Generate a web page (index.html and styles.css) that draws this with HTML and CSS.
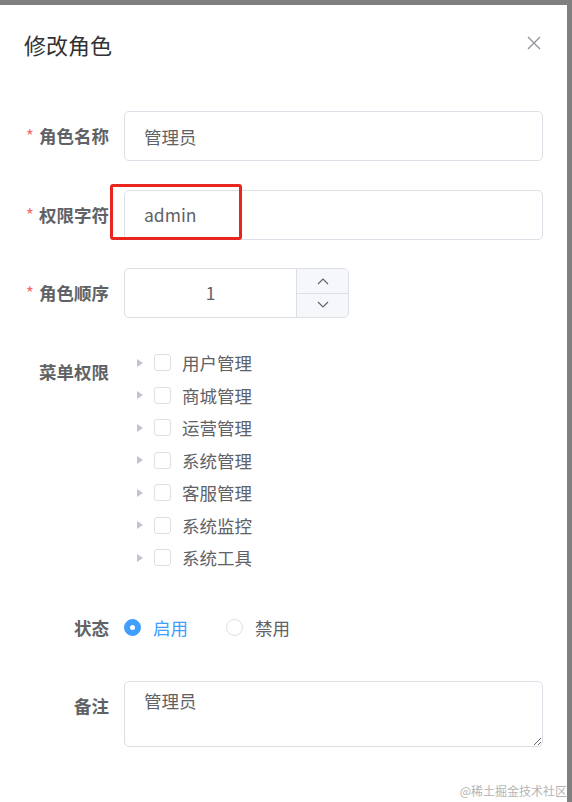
FILE: index.html
```html
<!DOCTYPE html>
<html lang="zh-CN">
<head>
<meta charset="utf-8">
<title>修改角色</title>
<link rel="stylesheet" href="styles.css">
</head>
<body>
<div class="dialog">
  <div class="dialog-header">
    <span class="dialog-title">修改角色</span>
    <svg class="close" width="14" height="14" viewBox="0 0 14 14"><path d="M1 1 L13 13 M13 1 L1 13" stroke="#909399" stroke-width="1.3" fill="none"/></svg>
  </div>
  <div class="dialog-body">
    <div class="form-item">
      <label class="form-label required">角色名称</label>
      <div class="form-content">
        <input class="input" type="text" value="管理员">
      </div>
    </div>
    <div class="form-item">
      <label class="form-label required">权限字符</label>
      <div class="form-content">
        <input class="input" type="text" value="admin">
      </div>
      <div class="highlight"></div>
    </div>
    <div class="form-item">
      <label class="form-label required">角色顺序</label>
      <div class="form-content">
        <div class="number-input">
          <div class="number-value">1</div>
          <div class="number-controls">
            <div class="ctrl ctrl-up"><svg width="12" height="8" viewBox="0 0 12 8"><path d="M1 7 L6 2 L11 7" stroke="#606266" stroke-width="1.1" fill="none"/></svg></div>
            <div class="ctrl ctrl-down"><svg width="12" height="8" viewBox="0 0 12 8"><path d="M1 1 L6 6 L11 1" stroke="#606266" stroke-width="1.1" fill="none"/></svg></div>
          </div>
        </div>
      </div>
    </div>
    <div class="form-item">
      <label class="form-label">菜单权限</label>
      <div class="form-content">
        <ul class="tree">
          <li class="tree-node"><span class="caret"></span><span class="checkbox"></span><span class="tree-label">用户管理</span></li>
          <li class="tree-node"><span class="caret"></span><span class="checkbox"></span><span class="tree-label">商城管理</span></li>
          <li class="tree-node"><span class="caret"></span><span class="checkbox"></span><span class="tree-label">运营管理</span></li>
          <li class="tree-node"><span class="caret"></span><span class="checkbox"></span><span class="tree-label">系统管理</span></li>
          <li class="tree-node"><span class="caret"></span><span class="checkbox"></span><span class="tree-label">客服管理</span></li>
          <li class="tree-node"><span class="caret"></span><span class="checkbox"></span><span class="tree-label">系统监控</span></li>
          <li class="tree-node"><span class="caret"></span><span class="checkbox"></span><span class="tree-label">系统工具</span></li>
        </ul>
      </div>
    </div>
    <div class="form-item">
      <label class="form-label">状态</label>
      <div class="form-content radios">
        <span class="radio checked"><span class="radio-dot"></span><span class="radio-label">启用</span></span>
        <span class="radio"><span class="radio-dot"></span><span class="radio-label">禁用</span></span>
      </div>
    </div>
    <div class="form-item">
      <label class="form-label">备注</label>
      <div class="form-content">
        <textarea class="textarea">管理员</textarea>
      </div>
    </div>
  </div>
  <div class="watermark">@稀土掘金技术社区</div>
</div>
</body>
</html>
```
FILE: styles.css
```css
html, body {
  margin: 0;
  padding: 0;
}
body {
  background: #808080;
  width: 572px;
  height: 802px;
  overflow: hidden;
  font-family: "Noto Sans CJK SC", "Noto Sans", sans-serif;
}
.dialog {
  position: relative;
  margin-top: 5px;
  width: 567px;
  height: 797px;
  background: #fff;
  box-sizing: border-box;
}
.dialog-header {
  display: flex;
  align-items: center;
  justify-content: space-between;
  padding: 24px 26px 13px 24px;
  height: 30px;
}
.dialog-title {
  font-size: 22px;
  line-height: 30px;
  color: #303133;
}
.close {
  display: block;
  margin-top: -2px;
}
.dialog-body {
  padding: 39px 24px 0 24px;
}
.form-item {
  position: relative;
  display: flex;
  align-items: flex-start;
  margin-bottom: 28.5px;
}
.form-label {
  width: 100px;
  flex: none;
  box-sizing: border-box;
  padding-right: 15px;
  text-align: right;
  font-size: 17.5px;
  line-height: 50px;
  font-weight: bold;
  color: #606266;
}
.form-label.required::before {
  content: "*";
  color: #f56c6c;
  margin-right: 5px;
  font-weight: normal;
}
.form-content {
  flex: 1;
  min-width: 0;
}
.input {
  display: block;
  width: 100%;
  height: 50px;
  box-sizing: border-box;
  border: 1px solid #dcdfe6;
  border-radius: 5px;
  padding: 0 19px;
  font-family: "Noto Sans CJK SC", "Noto Sans", sans-serif;
  font-size: 17.5px;
  color: #606266;
  outline: none;
  background: #fff;
}
.highlight {
  position: absolute;
  left: 86px;
  top: -6px;
  width: 132px;
  height: 56px;
  box-sizing: border-box;
  border: 3px solid #e8261f;
  border-radius: 3px;
  pointer-events: none;
}
.number-input {
  display: flex;
  width: 225px;
  height: 50px;
  box-sizing: border-box;
  border: 1px solid #dcdfe6;
  border-radius: 5px;
  overflow: hidden;
}
.number-value {
  flex: 1;
  text-align: center;
  line-height: 48px;
  font-size: 17.5px;
  color: #606266;
}
.number-controls {
  width: 51px;
  display: flex;
  flex-direction: column;
  border-left: 1px solid #dcdfe6;
  background: #f5f7fa;
}
.ctrl {
  flex: 1;
  display: flex;
  align-items: center;
  justify-content: center;
}
.ctrl-up {
  border-bottom: 1px solid #dcdfe6;
}
.tree {
  list-style: none;
  margin: 0;
  padding: 0;
}
.tree-node {
  display: flex;
  align-items: center;
  height: 32.5px;
}
.caret {
  width: 30px;
  height: 32px;
  flex: none;
  position: relative;
}
.caret::before {
  content: "";
  position: absolute;
  left: 13px;
  top: 12px;
  border-left: 6px solid #c0c4cc;
  border-top: 4px solid transparent;
  border-bottom: 4px solid transparent;
}
.checkbox {
  width: 17px;
  height: 17px;
  box-sizing: border-box;
  border: 1px solid #dcdfe6;
  border-radius: 3px;
  margin-right: 11px;
  flex: none;
  background: #fff;
}
.tree-label {
  font-size: 17.5px;
  color: #606266;
}
.radios {
  display: flex;
  align-items: center;
  height: 50px;
}
.radio {
  display: flex;
  align-items: center;
  margin-right: 38px;
}
.radio-dot {
  width: 17px;
  height: 17px;
  box-sizing: border-box;
  border: 1px solid #dcdfe6;
  border-radius: 50%;
  background: #fff;
  position: relative;
  margin-right: 12px;
}
.radio.checked .radio-dot {
  border-color: #409eff;
  background: #409eff;
}
.radio.checked .radio-dot::after {
  content: "";
  position: absolute;
  left: 50%;
  top: 50%;
  width: 5px;
  height: 5px;
  margin: -2.5px 0 0 -2.5px;
  border-radius: 50%;
  background: #fff;
}
.radio-label {
  font-size: 17.5px;
  color: #606266;
}
.radio.checked .radio-label {
  color: #409eff;
}
.textarea {
  display: block;
  width: 100%;
  height: 66px;
  box-sizing: border-box;
  border: 1px solid #dcdfe6;
  border-radius: 5px;
  padding: 6px 19px;
  font-family: "Noto Sans CJK SC", "Noto Sans", sans-serif;
  font-size: 17.5px;
  line-height: 26px;
  color: #606266;
  outline: none;
  resize: vertical;
}
.watermark {
  position: absolute;
  right: 0;
  bottom: 3px;
  font-size: 12px;
  color: #b4b4b4;
  letter-spacing: 0;
}
```
